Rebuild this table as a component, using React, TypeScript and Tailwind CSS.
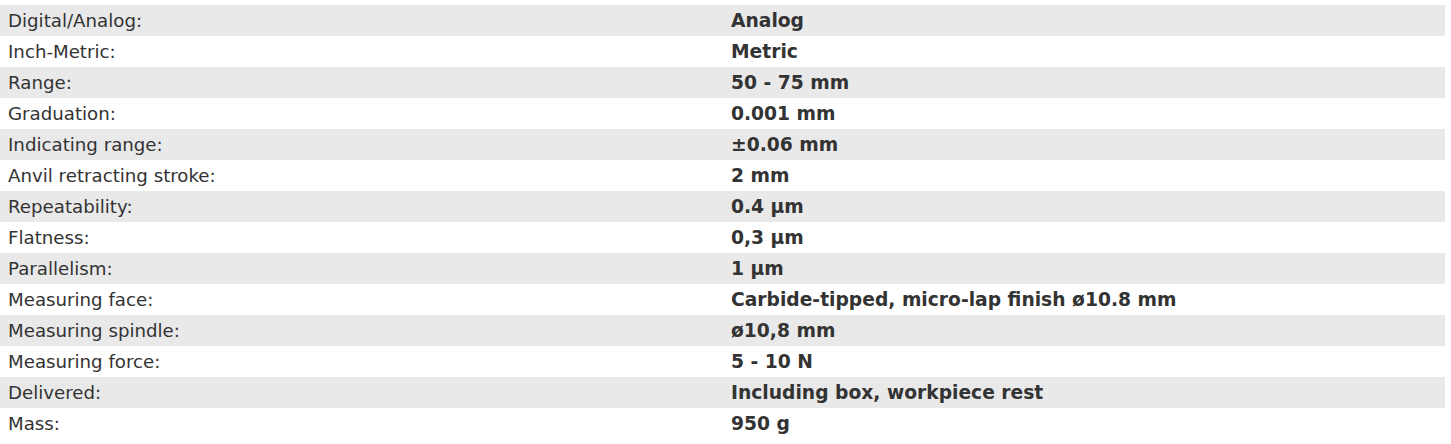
const rows: [string, string][] = [
  ["Digital/Analog:", "Analog"],
  ["Inch-Metric:", "Metric"],
  ["Range:", "50 - 75 mm"],
  ["Graduation:", "0.001 mm"],
  ["Indicating range:", "±0.06 mm"],
  ["Anvil retracting stroke:", "2 mm"],
  ["Repeatability:", "0.4 µm"],
  ["Flatness:", "0,3 µm"],
  ["Parallelism:", "1 µm"],
  ["Measuring face:", "Carbide-tipped, micro-lap finish ø10.8 mm"],
  ["Measuring spindle:", "ø10,8 mm"],
  ["Measuring force:", "5 - 10 N"],
  ["Delivered:", "Including box, workpiece rest"],
  ["Mass:", "950 g"],
];

export default function App() {
  return (
    <div className="w-[1451px] h-[444px] bg-white pt-[5px] pr-[6px] text-[#333333] text-[18.2px] leading-[31px]" style={{ fontFamily: '"DejaVu Sans", Verdana, sans-serif' }}>
      {rows.map(([k, v], i) => (
        <div key={k} className={`flex h-[31px] ${i % 2 === 0 ? "bg-[#e9e9e9]" : "bg-white"}`}>
          <div className="w-[723px] pl-[8px] whitespace-nowrap">{k}</div>
          <div className="pl-[8px] font-bold text-[18.7px] whitespace-nowrap">{v}</div>
        </div>
      ))}
    </div>
  );
}
